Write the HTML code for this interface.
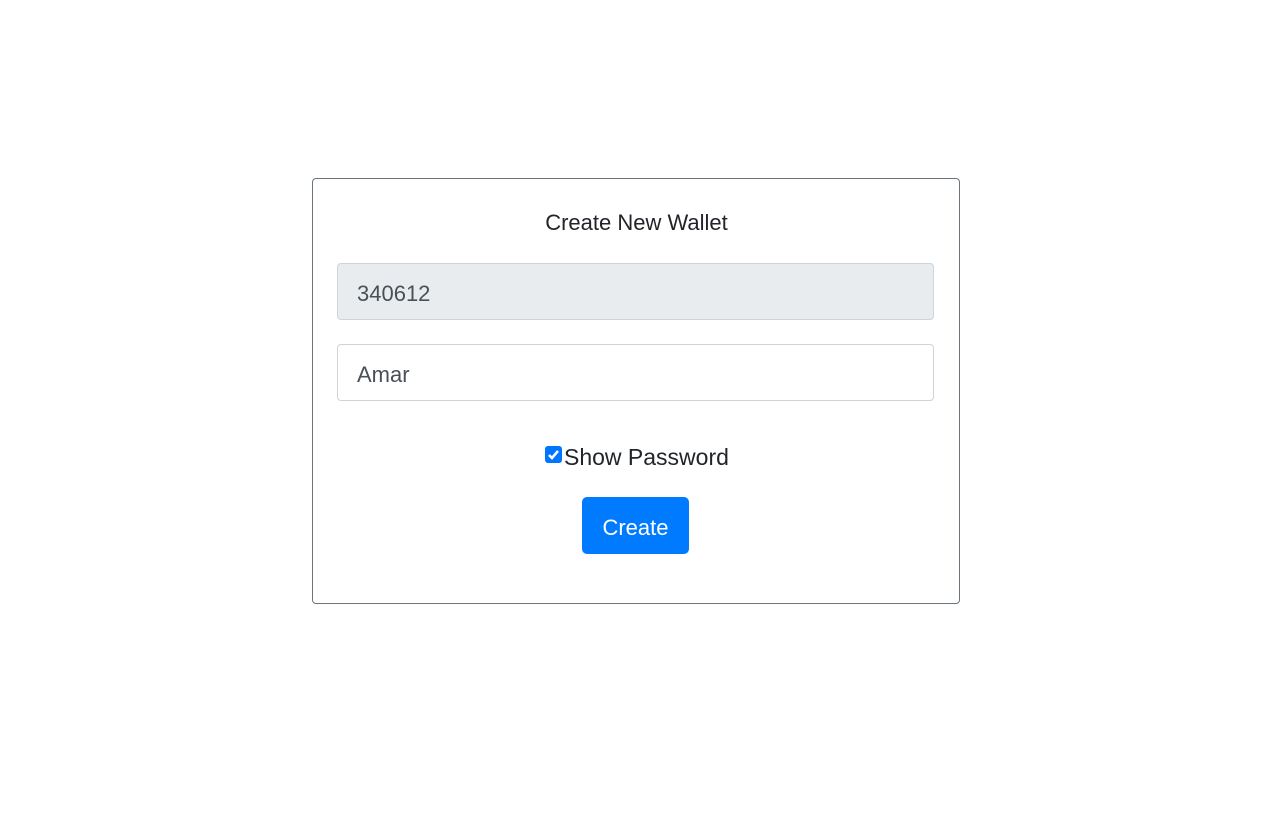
<!DOCTYPE html>
<html><head><style>
body{margin:0;background:#fff;font-family:"Liberation Sans",sans-serif;color:#212529;}
.card{position:absolute;left:312px;top:178px;width:646px;height:424px;border:1px solid #6c757d;border-radius:4px;box-sizing:content-box;}
h{position:absolute;left:0;right:0;top:210px;text-align:center;font-size:22px;}
.in{position:absolute;left:337px;width:597px;height:57px;border:1px solid #ced4da;border-radius:4px;font-size:22px;color:#495057;line-height:59px;padding-left:19px;box-sizing:border-box;}
.cb{position:absolute;left:545px;top:446px;width:17px;height:17px;background:#0075ff;border-radius:3px;}
.lab{position:absolute;left:564px;top:444px;font-size:23px;}
.btn{position:absolute;left:582px;top:497px;width:107px;height:57px;background:#007bff;border-radius:5px;color:#fff;font-size:22px;text-align:center;line-height:61px;}
</style></head><body>
<div class="card"></div>
<h>Create New Wallet</h>
<div class="in" style="top:263px;background:#e9ecef">340612</div>
<div class="in" style="top:344px;background:#fff">Amar</div>
<div class="cb"><svg width="17" height="17"><path d="M4 9l3 3 6-7" stroke="#fff" stroke-width="2.5" fill="none"/></svg></div>
<div class="lab">Show Password</div>
<div class="btn">Create</div>
</body></html>
